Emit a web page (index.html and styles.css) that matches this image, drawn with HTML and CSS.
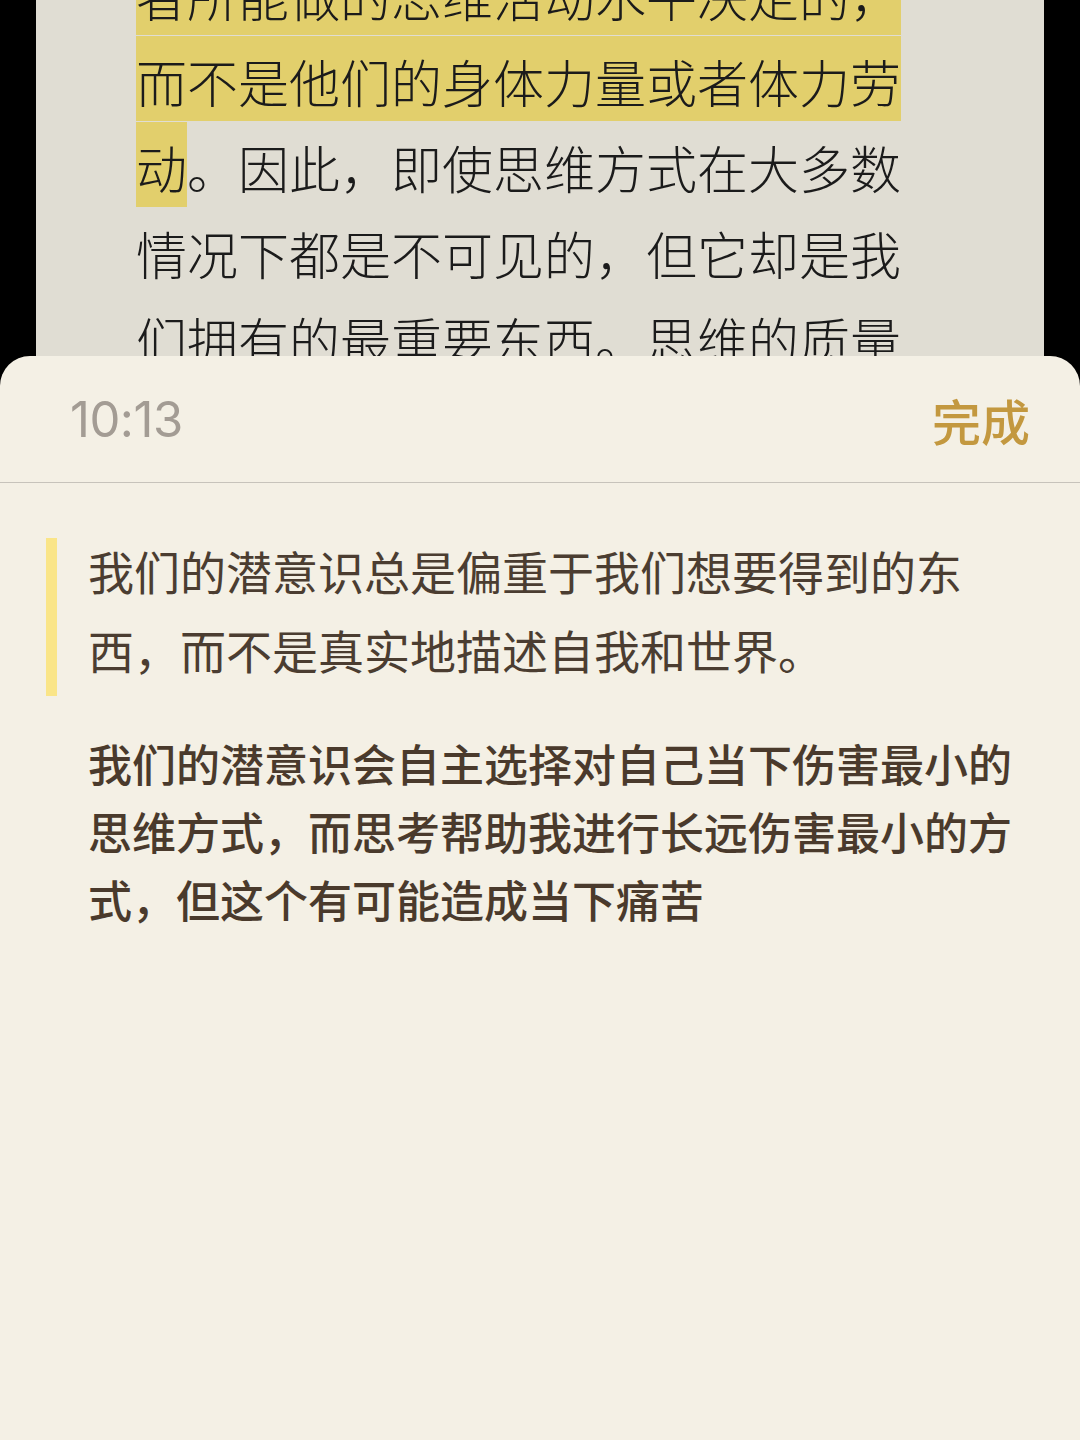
FILE: index.html
```html
<!DOCTYPE html>
<html lang="zh-CN">
<head>
<meta charset="utf-8">
<title>笔记</title>
<link rel="stylesheet" href="styles.css">
</head>
<body>
<div class="screen">
  <div class="reader">
    <div class="page">
      <div class="page-text">
        <div class="line"><span class="seg hl">者所能做的思维活动水平决定的，</span></div>
        <div class="line"><span class="seg hl">而不是他们的身体力量或者体力劳</span></div>
        <div class="line"><span class="seg hl">动</span><span class="seg">。因此，即使思维方式在大多数</span></div>
        <div class="line"><span class="seg">情况下都是不可见的，但它却是我</span></div>
        <div class="line"><span class="seg">们拥有的最重要东西。思维的质量</span></div>
      </div>
    </div>
  </div>
  <div class="sheet">
    <div class="sheet-header">
      <span class="time">10:13</span>
      <span class="done">完成</span>
    </div>
    <div class="sheet-body">
      <div class="quote">
        <div class="quote-bar"></div>
        <p class="quote-text">我们的潜意识总是偏重于我们想要得到的东西，而不是真实地描述自我和世界。</p>
      </div>
      <p class="note">我们的潜意识会自主选择对自己当下伤害最小的思维方式，而思考帮助我进行长远伤害最小的方式，但这个有可能造成当下痛苦</p>
    </div>
  </div>
</div>
</body>
</html>
```

FILE: styles.css
```css
* { box-sizing: border-box; }
html, body {
  margin: 0;
  padding: 0;
  background: #000;
}
body {
  font-family: "Noto Sans CJK SC", "Noto Sans", sans-serif;
}
.screen {
  width: 1080px;
  height: 1440px;
  overflow: hidden;
  background: #000;
}
.reader {
  height: 386px;
  padding: 0 36px;
  overflow: hidden;
}
.page {
  height: 100%;
  background: #e0ddd3;
  padding-left: 100px;
  overflow: hidden;
}
.page-text {
  margin-top: -50px;
  font-size: 51px;
  font-weight: 300;
  color: #1b1b1b;
}
.line {
  display: flex;
  height: 86px;
}
.seg {
  display: block;
  height: 85px;
  padding-top: 8px;
  line-height: 74px;
  white-space: nowrap;
}
.hl {
  background: #e2cf6c;
}
.sheet {
  position: relative;
  z-index: 1;
  margin-top: -30px;
  height: 1084px;
  background: #f4f0e5;
  border-radius: 30px 30px 0 0;
}
.sheet-header {
  height: 127px;
  display: flex;
  align-items: center;
  justify-content: space-between;
  padding: 0 50px 0 70px;
  border-bottom: 1.5px solid #c7c3bb;
}
.time {
  font-family: "Inter", "Liberation Sans", sans-serif;
  font-size: 49px;
  font-weight: 400;
  color: #a39c94;
  letter-spacing: -0.5px;
}
.done {
  font-size: 49px;
  font-weight: 500;
  color: #c3983f;
}
.sheet-body {
  padding: 48px 50px 0 46px;
}
.quote {
  display: flex;
  align-items: stretch;
}
.quote-bar {
  width: 11px;
  flex: none;
  margin: 7px 0 -7px 0;
  background: #fae588;
}
.quote-text {
  margin: 0 0 0 31px;
  width: 900px;
  font-size: 46px;
  line-height: 79px;
  font-weight: 400;
  color: #4b3d31;
}
.note {
  margin: 40px 0 0 42px;
  font-size: 44px;
  line-height: 68px;
  font-weight: 500;
  color: #4a3a2c;
}
```
